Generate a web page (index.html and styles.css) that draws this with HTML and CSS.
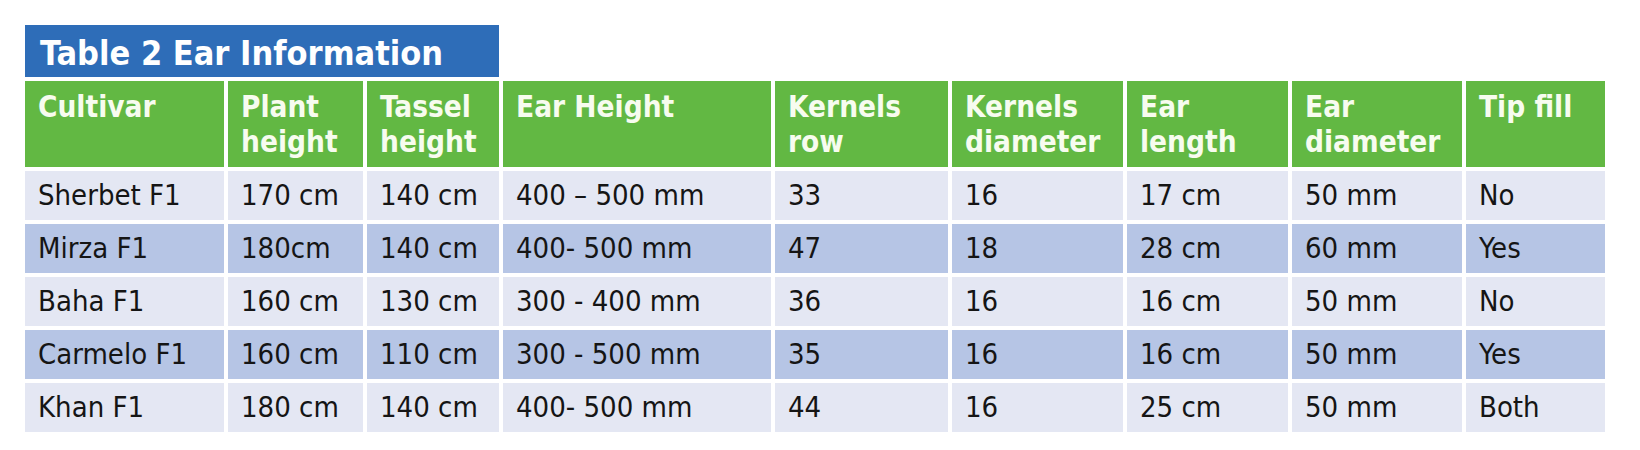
FILE: index.html
```html
<!DOCTYPE html>
<html lang="en">
<head>
<meta charset="utf-8">
<title>Table 2 Ear Information</title>
<link rel="stylesheet" href="styles.css">
</head>
<body>
<table class="ear-table">
  <colgroup>
    <col class="c1"><col class="c2"><col class="c3"><col class="c4"><col class="c5"><col class="c6"><col class="c7"><col class="c8"><col class="c9">
  </colgroup>
  <thead>
    <tr class="title-row">
      <th class="title" colspan="3">Table 2 Ear Information</th>
      <td class="blank" colspan="6"></td>
    </tr>
    <tr class="head-row">
      <th>Cultivar</th>
      <th>Plant<br>height</th>
      <th>Tassel<br>height</th>
      <th>Ear Height</th>
      <th>Kernels<br>row</th>
      <th>Kernels<br>diameter</th>
      <th>Ear<br>length</th>
      <th>Ear<br>diameter</th>
      <th>Tip fill</th>
    </tr>
  </thead>
  <tbody>
    <tr class="light">
      <td>Sherbet F1</td><td>170 cm</td><td>140 cm</td><td>400 – 500 mm</td><td>33</td><td>16</td><td>17 cm</td><td>50 mm</td><td>No</td>
    </tr>
    <tr class="dark">
      <td>Mirza F1</td><td>180cm</td><td>140 cm</td><td>400- 500 mm</td><td>47</td><td>18</td><td>28 cm</td><td>60 mm</td><td>Yes</td>
    </tr>
    <tr class="light">
      <td>Baha F1</td><td>160 cm</td><td>130 cm</td><td>300 - 400 mm</td><td>36</td><td>16</td><td>16 cm</td><td>50 mm</td><td>No</td>
    </tr>
    <tr class="dark">
      <td>Carmelo F1</td><td>160 cm</td><td>110 cm</td><td>300 - 500 mm</td><td>35</td><td>16</td><td>16 cm</td><td>50 mm</td><td>Yes</td>
    </tr>
    <tr class="light">
      <td>Khan F1</td><td>180 cm</td><td>140 cm</td><td>400- 500 mm</td><td>44</td><td>16</td><td>25 cm</td><td>50 mm</td><td>Both</td>
    </tr>
  </tbody>
</table>
</body>
</html>
```

FILE: styles.css
```css
html, body {
  margin: 0;
  padding: 0;
  background: #ffffff;
}

body {
  font-family: "DejaVu Sans Condensed", "DejaVu Sans", sans-serif;
  font-stretch: semi-condensed;
}

.ear-table {
  margin: 21px 0 0 21px;
  border-collapse: separate;
  border-spacing: 4px;
  table-layout: fixed;
  width: 1588px;
}

.c1 { width: 199px; }
.c2 { width: 135px; }
.c3 { width: 132px; }
.c4 { width: 268px; }
.c5 { width: 173px; }
.c6 { width: 171px; }
.c7 { width: 161px; }
.c8 { width: 170px; }
.c9 { width: 139px; }

.ear-table th,
.ear-table td {
  box-sizing: border-box;
  padding: 0 0 0 13px;
  text-align: left;
  overflow: hidden;
  white-space: nowrap;
}

.title-row .title {
  height: 52px;
  padding: 8px 0 0 15px;
  vertical-align: top;
  background: #2e6db8;
  color: #ffffff;
  font-size: 34px;
  font-weight: bold;
  line-height: 40px;
}

.title-row .blank {
  background: transparent;
  padding: 0;
}

.head-row th {
  height: 86px;
  padding-top: 9px;
  vertical-align: top;
  background: #62b843;
  color: #f7fcef;
  font-size: 29.5px;
  font-weight: bold;
  line-height: 35px;
}

tbody td {
  height: 49px;
  vertical-align: middle;
  font-size: 29px;
  line-height: 49px;
  color: #151515;
}

tbody .light td {
  background: #e4e7f3;
}

tbody .dark td {
  background: #b6c5e5;
}
```
